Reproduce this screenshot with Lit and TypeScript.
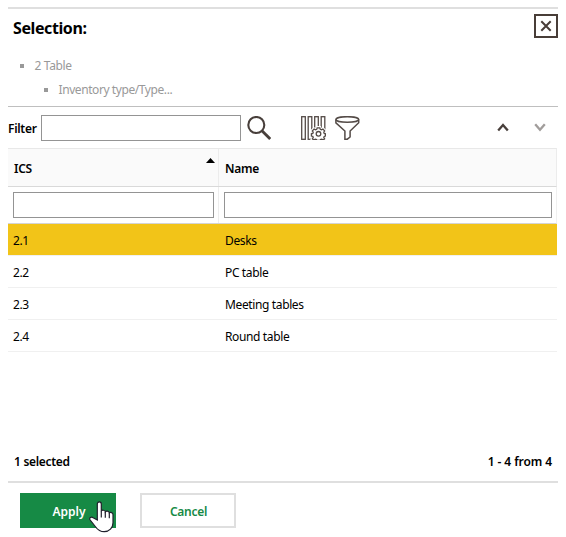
import { LitElement, html, css, svg } from "lit";
import { customElement, state } from "lit/decorators.js";
import { classMap } from "lit/directives/class-map.js";

const ROWS = [
  { ics: "2.1", name: "Desks", cls: "desks" },
  { ics: "2.2", name: "PC table", cls: "pc" },
  { ics: "2.3", name: "Meeting tables", cls: "meeting" },
  { ics: "2.4", name: "Round table", cls: "round" },
];

const bars = [0.7, 7.2, 13.7, 20.2].map(
  (x) => svg`<rect x=${x} y="0.7" width="3.6" height="22.6" />`
);

@customElement("app-root")
export class AppRoot extends LitElement {
  @state() private selected = "2.1";

  static styles = css`
    :host {
      display: block;
      width: 566px;
      height: 537px;
      background: #fff;
      color: #000;
      font: 12px/16px "Noto Sans", "Open Sans", sans-serif;
      overflow: hidden;
    }
    * { box-sizing: border-box; }
    svg { display: block; fill: none; flex: none; }
    button, input { font: inherit; padding: 0; margin: 0; outline: none; border-radius: 0; }
    button { background: none; border: 0; color: inherit; cursor: pointer; }
    .dialog { width: 550px; margin-left: 8px; padding-top: 7px; }
    .title { display: flex; justify-content: space-between; align-items: flex-start; height: 44px; border-top: 2px solid #dfdfdf; padding: 5px 0 0 5px; }
    h1 { margin: 3px 0 0; font-size: 16px; line-height: 22px; font-weight: 700; letter-spacing: -0.4px; }
    .tree { height: 56px; border-bottom: 1px solid #bfbfbf; color: #999; padding: 7px 0 0 12px; }
    .node { display: flex; align-items: center; gap: 10.5px; height: 16px; margin-bottom: 8px; letter-spacing: -0.35px; }
    .node.child { padding-left: 24px; letter-spacing: -0.42px; }
    .node::before { content: ""; width: 4px; height: 4px; background: #999; }
    .toolbar { display: flex; align-items: center; height: 41px; padding-right: 12px; }
    .toolbar label { width: 33px; font-weight: 600; letter-spacing: -0.3px; padding-top: 2px; }
    input { border: 1px solid #949494; background: #fff; height: 26px; width: 100%; display: block; }
    .toolbar input { width: 200px; }
    .search { margin-left: 6px; }
    .columns { margin-left: 30px; }
    .funnel { margin-left: 9px; }
    .up { margin-left: auto; }
    .down { margin-left: 25px; }
    .grid { width: 549px; height: 333px; display: flex; flex-direction: column; }
    .line { display: grid; grid-template-columns: 211px 1fr; }
    .head { height: 39px; background: #fafafa; border-top: 1px solid #e8e8e8; border-bottom: 1px solid #d9d9d9; border-right: 1px solid #ececec; font-weight: 600; letter-spacing: -0.3px; }
    .head > div { padding: 12px 6px 0; }
    .head .first { border-right: 1px solid #ececec; display: flex; justify-content: space-between; padding-right: 3px; }
    .head .sort { margin-top: -3px; }
    .filters { height: 37px; border-bottom: 1px solid #d4d4d4; border-right: 1px solid #f0f0f0; }
    .filters > div { padding: 5px 4px 0 5px; }
    .filters .first { border-right: 1px solid #ededed; }
    .row { height: 32px; border-bottom: 1px solid #f0f0f0; align-items: center; letter-spacing: -0.37px; cursor: pointer; }
    .row > div { padding: 3px 6px 0; }
    .row > div:first-child { padding-left: 5px; letter-spacing: -0.45px; }
    .row.selected { background: #f2c418; background-clip: padding-box; }
    .foot { display: flex; justify-content: space-between; font-weight: 600; margin-top: auto; padding: 0 5px 11px 6px; }
    .count { letter-spacing: -0.3px; }
    .range { letter-spacing: -0.08px; }
    .actions { border-top: 2px solid #dfdfdf; padding: 10px 12px; display: flex; gap: 24px; position: relative; }
    .actions button { width: 96px; height: 35px; font-weight: 600; padding-top: 2px; }
    .apply { background: #168a45; color: #fff; padding-left: 2px !important; }
    .cancel { border: 2px solid #dfdfdf !important; color: #168a45; letter-spacing: -0.3px; padding-left: 1px !important; }
    .pointer { position: absolute; left: 81px; top: 18px; pointer-events: none; }
  `;

  render() {
    return html`
      <main class="dialog">
        <header class="title">
          <h1>Selection:</h1>
          <button aria-label="Close">
            <svg width="24" height="24" stroke="#483d38" stroke-width="2">
              <rect x="1" y="1" width="22" height="22" />
              <path d="M7.3 7.3 16.7 16.7M16.7 7.3 7.3 16.7" />
            </svg>
          </button>
        </header>
        <section class="tree">
          <div class="node">2 Table</div>
          <div class="node child">Inventory type/Type...</div>
        </section>
        <section class="toolbar">
          <label for="filter">Filter</label>
          <input id="filter" />
          <svg class="search" width="24" height="24" stroke="#483f3b">
            <circle cx="9.3" cy="9" r="8" stroke-width="2.1" />
            <path d="M15.2 15 23.2 23" stroke-width="2.8" />
          </svg>
          <svg class="columns" width="25" height="24" stroke="#544b47" stroke-width="1.3">
            ${bars}
            <path
              fill="#fff"
              stroke="#fff"
              stroke-width="3"
              d="M16.2 11.5h2.6l.5 1.7 1.1.5 1.6-.9 1.7 1.7-.9 1.6.5 1.1 1.2.4v2.5l-1.2.4-.5 1.1.9 1.6h-12.4l.9-1.6-.5-1.1-1.4-.4v-2.5l1.4-.4.5-1.1-.9-1.6 1.7-1.7 1.6.9 1.1-.5Z"
            />
            <path
              fill="#fff"
              d="M16.2 11.8h2.6l.5 1.6 1.1.5 1.5-.8 1.7 1.7-.8 1.5.4 1.1 1.2.4v2.2l-1.2.4-.4 1.1.8 1.3-1.2 1.1-1.8-.7-1.1.4-.4.7h-3.2l-.4-.7-1.1-.4-1.8.7-1.2-1.1.8-1.3-.4-1.1-1.4-.4v-2.2l1.4-.4.4-1.1-.8-1.5 1.7-1.7 1.5.8 1.1-.5Z"
            />
            <circle cx="17.5" cy="17.8" r="2.3" />
          </svg>
          <svg class="funnel" width="25" height="24" stroke="#544b47" stroke-width="1.5">
            <ellipse cx="12.3" cy="3.5" rx="11.4" ry="2.8" />
            <path d="M.9 3.6v3.2l9 8.2v8.2h2.4l2.8-2.2v-6l8.6-8.2V3.6" />
          </svg>
          <svg class="up" width="12" height="9" stroke="#483f3b" stroke-width="2.3">
            <path d="M1.2 7.6 6 2l4.8 5.6" />
          </svg>
          <svg class="down" width="12" height="9" stroke="#a19d9b" stroke-width="2.3">
            <path d="M1.2 1.2 6 6.8l4.8-5.6" />
          </svg>
        </section>
        <section class="grid">
          <div class="line head">
            <div class="first">
              <span>ICS</span>
              <svg class="sort" width="9" height="5"><path fill="#000" d="M0 5 4.5 0 9 5Z" /></svg>
            </div>
            <div>Name</div>
          </div>
          <div class="line filters">
            <div class="first"><input aria-label="ICS" /></div>
            <div><input aria-label="Name" /></div>
          </div>
          ${ROWS.map(
            (r) => html`<div
              class=${classMap({ line: true, row: true, [r.cls]: true, selected: r.ics === this.selected })}
              @click=${() => (this.selected = r.ics)}
            >
              <div>${r.ics}</div>
              <div>${r.name}</div>
            </div>`
          )}
          <div class="foot"><span class="count">1 selected</span><span class="range">1 - 4 from 4</span></div>
        </section>
        <footer class="actions">
          <button class="apply">Apply</button>
          <button class="cancel">Cancel</button>
          <svg class="pointer" width="26" height="32" viewBox="0 0 26 32" fill="#fff" stroke="#20202c" stroke-width="1.2">
            <path
              fill="#fff"
              d="M8.3 19V3C8.3.2 12.3.2 12.3 3v7.2c.4-1.5 3.8-1.3 4 .6.8-1.2 3.6-.9 4 .9 1.2-.8 3.7-.2 3.7 2v8c0 5.2-3.8 9-8.8 9-4 0-6.3-1.6-8.5-4.7L1 18.8c-1-2 1.2-3.5 3.2-2.1Z"
            />
            <path d="M12.3 10v6.5M16.3 11v5.8M20.3 12v5.2" />
          </svg>
        </footer>
      </main>
    `;
  }
}
